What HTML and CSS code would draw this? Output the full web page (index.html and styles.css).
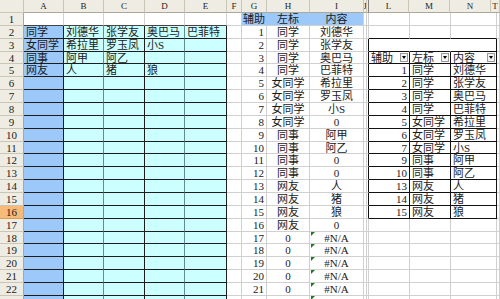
FILE: index.html
```html
<!DOCTYPE html>
<html lang="zh-CN">
<head>
<meta charset="UTF-8">
<meta name="viewport" content="width=device-width, initial-scale=1.0">
<title>Sheet1</title>
<link rel="stylesheet" href="styles.css">
</head>
<body>

<div class="sheet">
    <div class="col-head" id="col-head"></div>
    <div class="grid" id="grid"></div>
</div>

<script>
    const colHead = document.getElementById("col-head");
    const grid = document.getElementById("grid");
    const cols = ["A", "B", "C", "D", "E", "F", "G", "H", "I", "J", "K", "L", "M", "N", "T"];
    const rowCount = 23;
    const activeRow = 16;

    const values = {
        A2: "同学", B2: "刘德华", C2: "张学友", D2: "奥巴马", E2: "巴菲特",
        A3: "女同学", B3: "希拉里", C3: "罗玉凤", D3: "小S",
        A4: "同事", B4: "阿甲", C4: "阿乙",
        A5: "网友", B5: "人", C5: "猪", D5: "狼",
        G1: "辅助", H1: "左标", I1: "内容"
    };

    // helper columns G:I
    const helper = [
        ["同学", "刘德华"], ["同学", "张学友"], ["同学", "奥巴马"], ["同学", "巴菲特"],
        ["女同学", "希拉里"], ["女同学", "罗玉凤"], ["女同学", "小S"], ["女同学", "0"],
        ["同事", "阿甲"], ["同事", "阿乙"], ["同事", "0"], ["同事", "0"],
        ["网友", "人"], ["网友", "猪"], ["网友", "狼"], ["网友", "0"],
        ["0", "#N/A"], ["0", "#N/A"], ["0", "#N/A"], ["0", "#N/A"], ["0", "#N/A"]
    ];
    helper.forEach((h, i) => {
        values["G" + (i + 2)] = String(i + 1);
        values["H" + (i + 2)] = h[0];
        values["I" + (i + 2)] = h[1];
    });

    // filtered list L:N
    const list = [
        [1, "同学", "刘德华"], [2, "同学", "张学友"], [3, "同学", "奥巴马"], [4, "同学", "巴菲特"],
        [5, "女同学", "希拉里"], [6, "女同学", "罗玉凤"], [7, "女同学", "小S"],
        [9, "同事", "阿甲"], [10, "同事", "阿乙"],
        [13, "网友", "人"], [14, "网友", "猪"], [15, "网友", "狼"]
    ];
    list.forEach((r, i) => {
        values["L" + (i + 5)] = String(r[0]);
        values["M" + (i + 5)] = r[1];
        values["N" + (i + 5)] = r[2];
    });
    values.L4 = "辅助";
    values.M4 = "左标";
    values.N4 = "内容";

    function cellClasses(col, row) {
        const ci = cols.indexOf(col);
        const cls = ["cell"];
        if (col === "J" || col === "K" || col === "T") cls.push("thin");
        if (row === 1 && ci <= 4) cls.push("box-top");
        if (row >= 2 && col === "A") cls.push("blue", "box");
        if (row >= 2 && ci >= 1 && ci <= 4) cls.push("cyan", "box");
        if (row >= 2 && (col === "B" || col === "D")) cls.push("soft");
        if (row === 1 && ci >= 6 && ci <= 8) cls.push("blue", "title", "center");
        if (row === 1 && (col === "G" || col === "H")) cls.push("joined");
        if (col === "G" && row >= 2) cls.push("num");
        if ((col === "H" || col === "I") && row >= 2) cls.push("center");
        if (col === "I" && row >= 18) cls.push("err");
        if (col === "K" && row >= 3 && row <= 16) cls.push("list-left");
        if (ci >= 11 && ci <= 13) {
            if (row === 2) cls.push("list-top");
            if (row >= 3 && row <= 16) cls.push("list");
            if (row === 3 && col !== "N") cls.push("merged");
            if (row === 4) cls.push("filter");
            if (col === "L" && row >= 5) cls.push("num");
        }
        return cls.join(" ");
    }

    function addDiv(parent, className, text) {
        const div = document.createElement("div");
        div.className = className;
        if (text) div.textContent = text;
        parent.appendChild(div);
        return div;
    }

    addDiv(colHead, "corner");
    cols.forEach(col => addDiv(colHead, "ch" + (col === "K" ? " thin" : ""), col === "K" ? "" : col));

    for (let row = 1; row <= rowCount; row++) {
        // last row is only a sliver at the bottom edge
        const label = row < rowCount ? String(row) : "";
        addDiv(grid, "rh" + (row === activeRow ? " active" : ""), label);
        cols.forEach(col => {
            const text = row < rowCount ? values[col + row] : "";
            const cell = addDiv(grid, cellClasses(col, row), text);
            if (row === 4 && cell.classList.contains("filter")) {
                const btn = document.createElement("span");
                btn.className = "drop";
                cell.appendChild(btn);
            }
        });
    }
</script>

</body>
</html>
```

FILE: styles.css
```css
body {
    margin: 0;
    padding: 0;
    background-color: #fff;
    overflow: hidden;
    font-family: "Liberation Serif", "Noto Sans CJK SC", serif;
    color: #1a1a1a;
}
.sheet {
    width: 500px;
    height: 299px;
    overflow: hidden;
}
.col-head {
    display: grid;
    grid-template-columns: 24px 40px 40px 41px 40px 42px 15px 25px 43px 54px 3px 2px 40px 41px 41px 9px;
    height: 13px;
}
.grid {
    display: grid;
    grid-template-columns: 24px 40px 40px 41px 40px 42px 15px 25px 43px 54px 3px 2px 41px 41px 46px 3px;
    grid-template-rows: repeat(23, 12.86px);
}
.corner,
.ch,
.rh {
    box-sizing: border-box;
    background-color: #efede3;
    border-right: 1px solid #c9c6b6;
    border-bottom: 1px solid #c9c6b6;
    color: #222;
    display: flex;
    align-items: center;
    justify-content: center;
    overflow: hidden;
    white-space: nowrap;
}
.ch {
    font-size: 9px;
    border-bottom-color: #aca899;
    line-height: 12px;
}
.ch.thin {
    border-right-color: #808080;
}
.rh {
    font-size: 11px;
    line-height: 12px;
    border-right-color: #aca899;
}
.rh.active {
    background-color: #f6bb78;
    border-bottom-color: #d89d52;
}
.cell {
    box-sizing: border-box;
    border-right: 1px solid #d0d0d0;
    border-bottom: 1px solid #d0d0d0;
    background-color: #fff;
    padding: 0 2px;
    display: flex;
    align-items: center;
    font-size: 11px;
    line-height: 12px;
    overflow: hidden;
    white-space: nowrap;
    position: relative;
}
.cell.thin {
    padding: 0;
}
.num {
    justify-content: flex-end;
}
.center {
    justify-content: center;
}
.title {
    padding: 0;
}
.blue {
    background-color: #9cc8fa;
}
.cyan {
    background-color: #ccffff;
}
.box {
    border-color: #1d1d1d;
}
.box.soft {
    border-right-color: #5f8f90;
}
.box-top {
    border-bottom-color: #444;
}
.title.joined {
    border-right-color: #9cc8fa;
}
.err::before {
    content: "";
    position: absolute;
    left: 1px;
    top: 0;
    border-top: 4px solid #1f7a1f;
    border-right: 4px solid transparent;
}
.list-left {
    border-right-color: #111;
}
.list-top {
    border-bottom-color: #111;
}
.list {
    border-right-color: #111;
    border-bottom-color: #111;
}
.list.merged {
    border-right-color: #fff;
}
.filter {
    justify-content: space-between;
    padding-right: 1px;
}
.drop {
    box-sizing: border-box;
    width: 8px;
    height: 9px;
    flex: none;
    border: 1px solid #9a9a9a;
    background-color: #f2f2f2;
    display: flex;
    align-items: center;
    justify-content: center;
}
.drop::after {
    content: "";
    border-left: 2px solid transparent;
    border-right: 2px solid transparent;
    border-top: 3px solid #000;
}
```
